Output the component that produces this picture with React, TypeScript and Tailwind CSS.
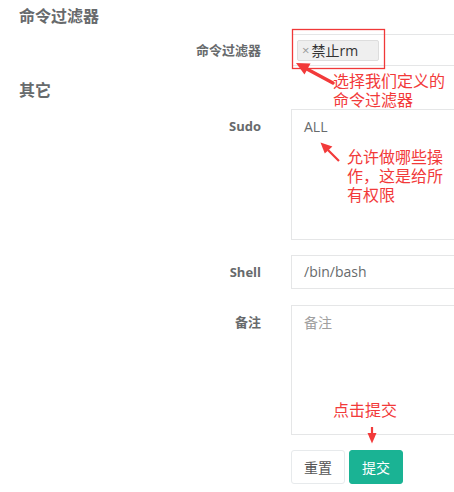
import React from 'react'

const font = { fontFamily: '"Open Sans", "Noto Sans CJK SC", sans-serif' }

function Label({ children, tall }: { children: React.ReactNode; tall?: boolean }) {
  return (
    <div
      className={
        'w-[276px] shrink-0 pr-[15px] text-right text-[13px] font-bold text-[#676a6c] ' +
        (tall ? 'pt-[7px] leading-[20px]' : 'leading-[34px]')
      }
    >
      {children}
    </div>
  )
}

function Overlay() {
  return (
    <svg className="pointer-events-none absolute left-0 top-0" width={454} height={492}>
      <rect x={292.5} y={29.5} width={92} height={39} fill="none" stroke="#f03838" strokeWidth={1.3} />
      {/* arrow to the tag */}
      <line x1={333} y1={83} x2={306} y2={68.5} stroke="#f23a3a" strokeWidth={3.5} strokeLinecap="round" />
      <polygon points="296,63 310.5,63.6 304.5,74.6" fill="#f23a3a" />
      {/* arrow to ALL */}
      <line x1={339} y1={161} x2={328} y2={150} stroke="#f23a3a" strokeWidth={2.2} />
      <polygon points="320.5,142.5 332.4,146.4 324.8,153.6" fill="#f23a3a" />
      {/* arrow to submit */}
      <line x1={372} y1={427} x2={372} y2={436} stroke="#f23a3a" strokeWidth={2.2} />
      <polygon points="367.5,433 376.5,433 372,443.5" fill="#f23a3a" />
    </svg>
  )
}

export default function App() {
  return (
    <div className="relative h-[492px] w-[454px] overflow-hidden bg-white" style={font}>
      <h2 className="pl-[19px] pt-[6px] text-[16px] font-bold leading-[20px] text-[#676a6c]">命令过滤器</h2>

      <div className="mt-[8px] flex">
        <div className="w-[276px] shrink-0 pr-[15px] text-right text-[13px] font-bold leading-[32px] text-[#676a6c]">
          命令过滤器
        </div>
        <div className="ml-[16px] flex h-[32px] w-[220px] shrink-0 items-start border border-[#e5e6e7] pl-[4px] pt-[5px]">
          <span className="flex h-[21px] w-[82px] items-center rounded-[2px] border border-[#dddddd] bg-[#efefef] pl-[4px] text-[14px] leading-[19px] text-[#333333]">
            <span className="mr-[2px] text-[13px] text-[#999999]">×</span>禁止rm
          </span>
        </div>
      </div>

      <h2 className="mt-[14px] pl-[19px] text-[16px] font-bold leading-[20px] text-[#676a6c]">其它</h2>

      <div className="mt-[9px] flex">
        <Label tall>Sudo</Label>
        <div className="ml-[15px] h-[131px] w-[220px] shrink-0 border border-[#e5e6e7] px-[12px] pt-[7px] text-[14px] leading-[20px] text-[#676a6c]">
          ALL
        </div>
      </div>

      <div className="mt-[15px] flex">
        <Label>Shell</Label>
        <div className="ml-[15px] h-[34px] w-[220px] shrink-0 border border-[#e5e6e7] px-[12px] text-[14px] leading-[32px] text-[#676a6c]">
          /bin/bash
        </div>
      </div>

      <div className="mt-[16px] flex">
        <Label tall>备注</Label>
        <div className="ml-[15px] h-[130px] w-[220px] shrink-0 border border-[#e5e6e7] px-[12px] pt-[7px] text-[14px] leading-[20px] text-[#a0a0a0]">
          备注
        </div>
      </div>

      <div className="ml-[291px] mt-[15px] flex gap-[4px]">
        <button className="h-[34px] w-[54px] rounded-[3px] border border-[#e7eaec] bg-white text-[14px] text-[#555555]">
          重置
        </button>
        <button className="h-[34px] w-[54px] rounded-[3px] border border-[#1ab394] bg-[#1ab394] text-[14px] text-white">
          提交
        </button>
      </div>

      <Overlay />

      <div className="absolute left-[333px] top-[72px] text-[16px] leading-[19px] text-[#f23a3a]">
        <div>选择我们定义的</div>
        <div>命令过滤器</div>
      </div>
      <div className="absolute left-[347px] top-[148px] w-[100px] text-[16px] leading-[19px] text-[#f23a3a]">
        <div>允许做哪些操</div>
        <div>作，这是给所</div>
        <div>有权限</div>
      </div>
      <div className="absolute left-[333px] top-[401px] text-[16px] leading-[19px] text-[#f23a3a]">点击提交</div>
    </div>
  )
}
